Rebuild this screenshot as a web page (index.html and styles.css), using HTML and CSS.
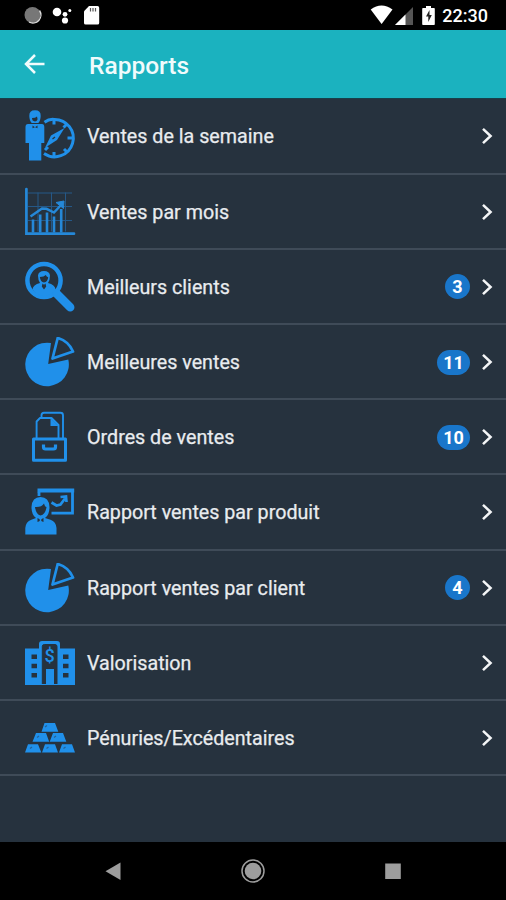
FILE: index.html
```html
<!DOCTYPE html>
<html lang="fr">
<head>
<meta charset="utf-8">
<title>Rapports</title>
<link rel="stylesheet" href="styles.css">
</head>
<body>
<svg class="defs" width="0" height="0" aria-hidden="true">
  <symbol id="chevron" viewBox="0 0 12 18"><path d="M2 1.8 9.6 9 2 16.2" fill="none" stroke="#f4f6f7" stroke-width="2.5"/></symbol>
  <symbol id="pie" viewBox="0 0 50 50"><path d="M26 6A21.800 21.800 0 1 0 43.300 22.500L23.200 27Z" fill="#2090ea"/><path d="M32.700 1Q43.500 4 48 14.500L27.500 21.500Z" fill="none" stroke="#2090ea" stroke-width="2.700" stroke-linejoin="round"/></symbol>
</svg>
<div class="screen">
  <header class="status">
    <svg class="status-left" width="80" height="30" viewBox="0 0 80 30">
      <circle cx="12.500" cy="15" r="8" fill="#777"/><path d="M19.500 10.500A8 8 0 0 1 9 22" fill="none" stroke="#ddd" stroke-width="1.400"/>
      <g fill="#fff"><circle cx="37" cy="12" r="4.300"/><circle cx="45" cy="14.300" r="2.400"/><circle cx="45" cy="20.500" r="3.100"/><circle cx="49.800" cy="10.400" r="1.500"/><path d="M69 6h8.500q1.700 0 1.700 1.700v15.200q0 1.700-1.700 1.700H65.700Q64 24.600 64 22.900V11.200Z"/></g>
      <path d="M70.500 8v3.500M73 8v3.500M75.500 8v3.500" stroke="#555" stroke-width="1.200"/>
    </svg>
    <div class="status-right">
      <svg width="66" height="30" viewBox="0 0 66 30">
        <path d="M.7 9.500Q11.500 1.500 22.500 9.500L11.600 24Z" fill="#fff"/>
        <path d="M25 25 43 7V25Z" fill="#555"/><path d="M25 25 35.500 14.500V25Z" fill="#fff"/>
        <path d="M53 8h3V6h5v2h3q.8 0 .8.800v15.400q0 .8-.8.800H53q-.8 0-.8-.8V8.800q0-.8.8-.8Z" fill="#fff"/><path d="M59.500 10 56 16.500h2.300V22l3.500-7h-2.300Z" fill="#222"/>
      </svg>
      <span class="clock">22:30</span>
    </div>
  </header>
  <nav class="toolbar">
    <svg width="22" height="22" viewBox="0 0 22 22"><path d="M20.500 11H2M11 2 2 11l9 9" fill="none" stroke="#f0fbfc" stroke-width="2.500"/></svg>
    <h1>Rapports</h1>
  </nav>
  <main class="list">
    <div class="row">
      <svg class="icon" viewBox="0 0 50 50">
        <g fill="#2090ea"><path d="M4.300 5Q4-.8 10-.8T15.700 5Q15.500 10 13.300 12H6.700Q4.500 10 4.300 5Z"/><path d="M3 13h14q2.300 0 2.300 3v16h-3v17.500H4V32H.5V16Q.5 13 3 13Z"/></g>
        <path d="M7 7Q10.500 7 12 5.500Q13.500 10 10 10.500Q7 10 7 7" fill="#26323e"/><path d="M7.500 14.500 10 16.300 12.500 14.500v2.700L10 16.300 7.500 17.200Z" fill="#26323e"/>
        <path d="M19.500 11.200Q24 7.900 29 8.400A18.700 18.700 0 1 1 19 42.500" fill="none" stroke="#2090ea" stroke-width="3"/>
        <path d="M29 9v4.500M29 41v5M42.500 27h5M38.500 16.500l3-3M39 38l3 3M20 39l3-3" stroke="#2090ea" stroke-width="3"/>
        <path d="M39.500 17 32 29 20 36.800 26 24.500Z" fill="#2090ea"/><path d="m27.500 28 2.500-2" stroke="#26323e" stroke-width="1.200"/>
      </svg>
      <span class="label">Ventes de la semaine</span>
      <svg class="chevron"><use href="#chevron"/></svg>
    </div>
    <div class="row">
      <svg class="icon" viewBox="0 0 50 50">
        <path d="M3 6h44M3 19.500h44M3 33.500h44M13 5.500v39M26.500 5.500v39M40.500 5.500v39" stroke="#255887" stroke-width="1" fill="none"/>
        <path d="M1.400 2v44.700H49" stroke="#2588d8" stroke-width="2.700" stroke-linecap="round" fill="none"/>
        <path d="M8 32.500v13M15.200 27.500v18M22 25.500v20M29 29.500v16M36.200 22v23.500" stroke="#2588d8" stroke-width="2.600"/>
        <path d="m5.500 29.500 11.500-8 4.500.3 7.500 3.700 8.500-9" fill="none" stroke="#2588d8" stroke-width="2.500"/><path d="m31 15.500 8-1.500-.5 7.500Z" fill="#2588d8" stroke="#2588d8"/>
      </svg>
      <span class="label">Ventes par mois</span>
      <svg class="chevron"><use href="#chevron"/></svg>
    </div>
    <div class="row">
      <svg class="icon" viewBox="0 0 50 50">
        <circle cx="19" cy="18.500" r="16.600" fill="none" stroke="#2090ea" stroke-width="4.500"/>
        <path d="m31.500 31.500 13.700 13.700" stroke="#2090ea" stroke-width="8.500" stroke-linecap="round"/>
        <path d="M7.500 27.500q.5-5 7.500-6.500-2-3-2-7.500Q13.500 9 19 9t6 4.500q0 4.500-2 7.500 7 1.500 7.500 6.500-4 6.500-11.500 6.500T7.500 27.500Z" fill="#2090ea"/>
        <path d="M14.800 15q4.200 0 6-2 .7 2 2.400 2.300-.5 4.700-4.200 5.200-3.500-.5-4.200-5.500Z" fill="#26323e"/><path d="m17.500 21.500 1.500 1.200 1.500-1.200.7 3-2.200 3-2.200-3Z" fill="#26323e"/>
      </svg>
      <span class="label">Meilleurs clients</span><span class="badge">3</span>
      <svg class="chevron"><use href="#chevron"/></svg>
    </div>
    <div class="row">
      <svg class="icon"><use href="#pie"/></svg>
      <span class="label">Meilleures ventes</span><span class="badge wide">11</span>
      <svg class="chevron"><use href="#chevron"/></svg>
    </div>
    <div class="row">
      <svg class="icon" viewBox="0 0 50 50">
        <g fill="none" stroke="#2090ea"><path d="M16.500 5V3.300Q16.500.8 19 .8h16.500q2.500 0 2.500 2.500V26" stroke-width="1.900"/><path d="M11.600 26V9.500L15 6h11.500l7 7v13" stroke-width="1.900" stroke-linejoin="round"/><path d="M8.500 27h32v21.300h-32Z" stroke-width="3" stroke-linejoin="round"/><path d="M18.500 32.500v2.500q0 2 2 2h8q2 0 2-2v-2.500" stroke-width="3.200"/></g><path d="M25.500 6v8h8" fill="#2090ea"/>
      </svg>
      <span class="label">Ordres de ventes</span><span class="badge wide">10</span>
      <svg class="chevron"><use href="#chevron"/></svg>
    </div>
    <div class="row">
      <svg class="icon" viewBox="0 0 50 50">
        <g fill="#2090ea"><path d="M12.500 1.500h36.700v4H12.500Z"/><path d="M.3 47.500V41q.5-6.500 6-8.300l4.700-1.700q-4.500-3-4.500-11Q7 10 15.500 10t9 10q0 8-4.500 11l5.500 1.700q5.500 1.800 6 8.300v6.500Z"/></g>
        <path d="M10 20q6.500.5 9-3.500 1 3.500 2.500 3.500-1 7.500-6 8.500-4.500-1-5.500-8.500Z" fill="#26323e"/>
        <path d="m12.500 31 3 1.700 3-1.700v4l-3-1.300-3 1.300Z" fill="#26323e"/><path d="M15.500 31v4" stroke="#2090ea" stroke-width="1.500"/>
        <path d="M47.500 4v22.200H26.500M14 5v4" fill="none" stroke="#2090ea" stroke-width="2.800"/>
        <path d="m26.500 15.500 5 3 4-1 4.500-6M35.500 10l5.500-.5.500 5.500" fill="none" stroke="#2090ea" stroke-width="2.700"/>
      </svg>
      <span class="label">Rapport ventes par produit</span>
      <svg class="chevron"><use href="#chevron"/></svg>
    </div>
    <div class="row">
      <svg class="icon"><use href="#pie"/></svg>
      <span class="label">Rapport ventes par client</span><span class="badge">4</span>
      <svg class="chevron"><use href="#chevron"/></svg>
    </div>
    <div class="row">
      <svg class="icon" viewBox="0 0 50 50">
        <path d="M0 10.500h14V6q0-3 3-3h15q3 0 3 3v4.500h15V47H0Z" fill="#2090ea"/>
        <path d="M17.300 46V8.500q0-2 2-2H30q2 0 2 2V46" fill="#26323e" stroke="#26323e"/>
        <path d="M21 31h8v16h-8Z" fill="#2090ea"/>
        <path d="M6.500 16.500H12V21H6.500Zm0 9.200H12v4.500H6.500Zm0 9.300H12v4.500H6.500ZM38 16.500h5.500V21H38Zm0 9.200h5.500v4.500H38Zm0 9.300h5.500v4.500H38Z" fill="#26323e"/>
        <text class="dollar" x="24.700" y="23.500">$</text>
      </svg>
      <span class="label">Valorisation</span>
      <svg class="chevron"><use href="#chevron"/></svg>
    </div>
    <div class="row">
      <svg class="icon" viewBox="0 0 50 50">
        <path d="M19.500 10H30l3.300 8.800H16.500ZM11 20h10l3.200 8.800H7.500Zm17 0h10l3.300 8.800H24.700ZM3 31.200h10l3.300 8.300H0Zm17 0h10l3 8.300H17Zm17 0h10l3 8.300H34Z" fill="#2090ea"/>
        <path d="m20 14 2-1.500M12 24.500l2-1.500m15 1.500 2-1.500M5 35.500 7 34m14.500 1.500 2-1.500m15 1.500 2-1.500" stroke="#256398" stroke-width="1.200"/>
      </svg>
      <span class="label">Pénuries/Excédentaires</span>
      <svg class="chevron"><use href="#chevron"/></svg>
    </div>
  </main>
  <footer class="navbar">
    <svg width="24" height="24" viewBox="0 0 24 24"><path d="M4.500 12.200 19.500 3.500v17.500Z" fill="#9d9d9d"/></svg>
    <svg width="24" height="24" viewBox="0 0 24 24"><circle cx="12" cy="12" r="11" fill="none" stroke="#9d9d9d" stroke-width="1.500"/><circle cx="12" cy="12" r="8.300" fill="#9d9d9d"/></svg>
    <svg width="24" height="24" viewBox="0 0 24 24"><path d="M4.200 4.500h15.600V20H4.200Z" fill="#9d9d9d"/></svg>
  </footer>
</div>
</body>
</html>
```
FILE: styles.css
```css
* { box-sizing: border-box; }
body { margin: 0; background: #000; font-family: Roboto, "Liberation Sans", sans-serif; }
svg { display: block; flex: none; }
.defs { display: none; }
.screen { width: 506px; height: 900px; display: flex; flex-direction: column; background: #26323e; }
.status { height: 30px; background: #000; display: flex; justify-content: space-between; padding: 0 18px 0 20px; flex: none; }
.status-right { display: flex; align-items: center; gap: 6px; }
.clock { color: #fff; font-size: 18px; font-weight: 500; line-height: 30px; padding-top: 2px; }
.toolbar { height: 69.4px; flex: none; background: #1bb2bf; border-bottom: 1px solid #17404a; display: flex; align-items: center; padding-left: 24px; gap: 43px; }
.toolbar h1 { margin: 3px 0 0; color: #f0fbfc; font-size: 24.5px; font-weight: 500; line-height: 30px; }
.list { flex: 1; min-height: 0; display: flex; flex-direction: column; }
.row { height: 75.2px; flex: none; display: flex; align-items: center; padding: 1px 13px 0 25px; border-bottom: 2px solid #3f4b58; }
.icon { width: 50px; height: 50px; overflow: visible; }
.label { flex: 1; margin-left: 12px; padding-top: 2px; color: #e9ecef; font-size: 19.7px; line-height: 26px; white-space: nowrap; -webkit-text-stroke: 0.25px #e9ecef; }
.badge { width: 25px; height: 25px; border-radius: 13px; background: #1976ca; color: #fff; font-size: 18px; font-weight: 700; line-height: 26px; text-align: center; }
.badge.wide { width: 33px; }
.chevron { width: 12px; height: 18px; margin-left: 11px; }
.row .label + .chevron { margin-left: 0; }
.dollar { fill: #2090ea; font-family: Roboto, sans-serif; font-size: 18px; font-weight: 500; text-anchor: middle; }
.navbar { height: 58px; flex: none; background: #000; display: flex; justify-content: space-between; align-items: center; padding: 0 101px; }
```
